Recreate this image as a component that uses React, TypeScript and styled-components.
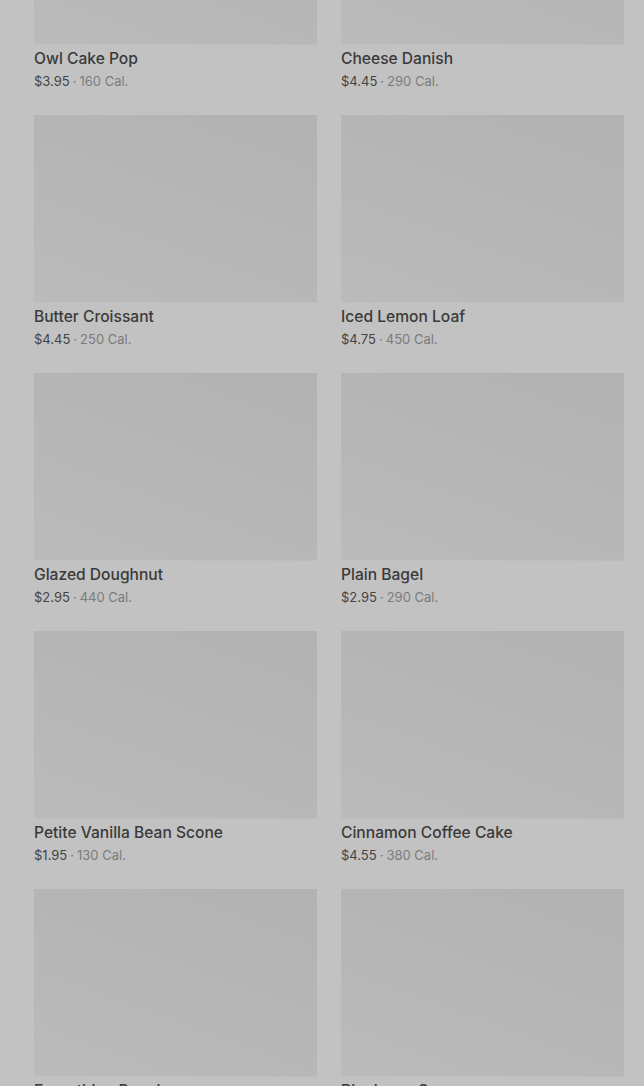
import * as React from "react";
import { styled, createGlobalStyle } from "styled-components";

type Item = { name: string; price: string; cal: number };

const items: Item[] = [
  { name: "Owl Cake Pop", price: "$3.95", cal: 160 },
  { name: "Cheese Danish", price: "$4.45", cal: 290 },
  { name: "Butter Croissant", price: "$4.45", cal: 250 },
  { name: "Iced Lemon Loaf", price: "$4.75", cal: 450 },
  { name: "Glazed Doughnut", price: "$2.95", cal: 440 },
  { name: "Plain Bagel", price: "$2.95", cal: 290 },
  { name: "Petite Vanilla Bean Scone", price: "$1.95", cal: 130 },
  { name: "Cinnamon Coffee Cake", price: "$4.55", cal: 380 },
  { name: "Everything Bagel", price: "$2.95", cal: 290 },
  { name: "Blueberry Scone", price: "$3.45", cal: 380 },
];

const GlobalStyle = createGlobalStyle`
  html, body {
    margin: 0;
    padding: 0;
    background: #c2c2c2;
    overflow: hidden;
  }
  body {
    font-family: Inter, "Noto Sans", Roboto, sans-serif;
    -webkit-font-smoothing: antialiased;
  }
`;

export default function App() {
  return (
    <>
      <GlobalStyle />
      <Page>
        <Grid>
          {items.map((item) => (
            <Card key={item.name}>
              <Thumb />
              <Name>{item.name}</Name>
              <Meta>
                <Price>{item.price}</Price>
                <Dot>·</Dot>
                <Cal>{item.cal} Cal.</Cal>
              </Meta>
            </Card>
          ))}
        </Grid>
      </Page>
    </>
  );
}

const Page = styled.main`
  width: 100%;
  height: 1086px;
  overflow: hidden;
  background: #c2c2c2;
`;

// the list is scrolled: the first row of cards sits partly above the fold
const Grid = styled.div`
  display: grid;
  grid-template-columns: 283px 283px;
  column-gap: 24px;
  row-gap: 24px;
  padding: 0 20px 0 34px;
  margin-top: -143px;
`;

const Card = styled.article`
  display: flex;
  flex-direction: column;
`;

const Thumb = styled.div`
  height: 188px;
  background: linear-gradient(20deg, #bbbbbb 0%, #b6b6b6 50%, #b2b2b2 100%);
  box-shadow: inset 0 -1px 0 rgba(255, 255, 255, 0.08);
`;

const Name = styled.h3`
  margin: 2px 0 1px;
  font-size: 15.6px;
  line-height: 23px;
  font-weight: 500;
  color: #3a3a3a;
`;

const Meta = styled.p`
  margin: 0;
  display: flex;
  align-items: center;
  gap: 3px;
  font-size: 13px;
  line-height: 20px;
  font-weight: 400;
`;

const Price = styled.span`
  color: #444444;
`;

const Dot = styled.span`
  color: #6f6f6f;
`;

const Cal = styled.span`
  color: #7c7c7c;
`;
